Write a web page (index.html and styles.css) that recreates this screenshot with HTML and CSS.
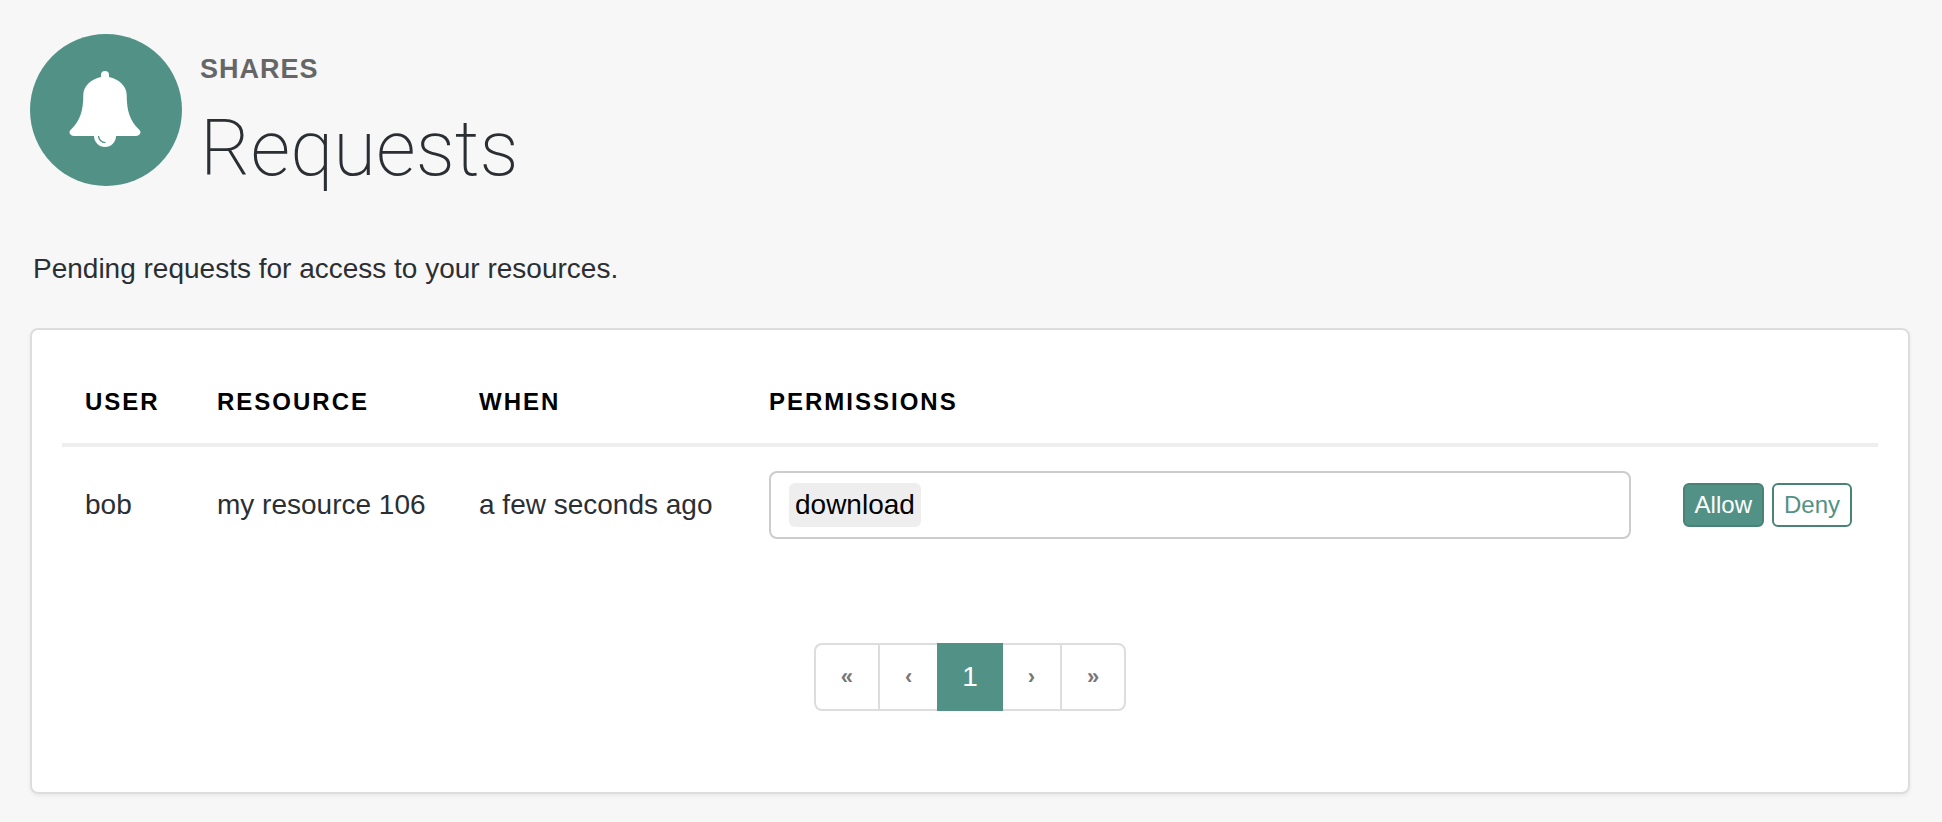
FILE: index.html
```html
<!DOCTYPE html>
<html lang="en">

<head>
    <meta charset="UTF-8">
    <meta name="viewport" content="width=device-width, initial-scale=1.0">
    <title>Requests</title>
    <link rel="stylesheet" href="styles.css">
</head>

<body>
    <header class="page-header">
        <!-- bell badge -->
        <svg class="page-icon" viewBox="0 0 152 152" aria-hidden="true">
            <circle class="disc" cx="76" cy="76" r="76" />
            <circle class="bell" cx="75" cy="102" r="11" />
            <path class="bell" d="M71 43V41a4 4 0 0 1 8 0V43C89 45 96.700 52 96.700 61C96.700 77 100 87 109 95.500C112 98 110 102 106 102H44C40 102 38 98 41 95.500C50 87 53.300 77 53.300 61C53.300 52 61 45 71 43Z" />
            <path class="bell-shine" d="M68.500 102a7 7 0 0 0 7 6.700" />
        </svg>
        <div class="page-titles">
            <h2 class="section-name">Shares</h2>
            <h1 class="page-title">Requests</h1>
        </div>
    </header>

    <p class="intro">Pending requests for access to your resources.</p>

    <main class="panel">
        <table class="requests">
            <thead>
                <tr>
                    <th class="col-user">User</th>
                    <th class="col-resource">Resource</th>
                    <th class="col-when">When</th>
                    <th><label for="permissions">Permissions</label></th>
                    <th class="col-actions"></th>
                </tr>
            </thead>
            <tbody>
                <tr>
                    <td>bob</td>
                    <td>my resource 106</td>
                    <td>a few seconds ago</td>
                    <td>
                        <div class="tag-box">
                            <span class="tag">download</span>
                            <input class="tag-input" id="permissions" type="text">
                        </div>
                    </td>
                    <td>
                        <div class="actions">
                            <button class="btn btn-primary" type="button">Allow</button>
                            <button class="btn" type="button">Deny</button>
                        </div>
                    </td>
                </tr>
            </tbody>
        </table>

        <nav class="pagination" aria-label="Pages">
            <a class="page-link" href="#first">«</a>
            <a class="page-link" href="#prev">‹</a>
            <a class="page-link active" href="#1">1</a>
            <a class="page-link" href="#next">›</a>
            <a class="page-link" href="#last">»</a>
        </nav>
    </main>
</body>

</html>
```
FILE: styles.css
```css
* {
    box-sizing: border-box;
    margin: 0;
    padding: 0;
}

body {
    background-color: #f7f7f7;
    color: #2b2f33;
    font-family: "Liberation Sans", Arial, sans-serif;
    font-size: 28px;
    line-height: 40px;
    padding: 34px 32px 30px 30px;
}

.page-header {
    display: flex;
    gap: 18px;
}

.page-icon {
    flex: none;
    width: 152px;
    height: 152px;
}

.disc {
    fill: #529286;
}

.bell {
    fill: #fff;
}

.bell-shine {
    fill: none;
    stroke: #529286;
    stroke-width: 1.3;
}

.page-titles {
    padding-top: 15px;
}

.section-name {
    color: #666;
    font-size: 27px;
    line-height: 40px;
    letter-spacing: 1px;
    text-transform: uppercase;
}

.page-title {
    margin-top: 12px;
    font-family: Roboto, sans-serif;
    font-size: 78px;
    font-weight: 200;
    line-height: 96px;
}

.intro {
    margin-top: 52px;
    padding-left: 3px;
}

.panel {
    margin-top: 39px;
    padding: 30px;
    background-color: #fff;
    border: 2px solid #ddd;
    border-radius: 8px;
    box-shadow: 0 2px 4px rgba(0, 0, 0, 0.06);
}

.requests {
    width: 100%;
    border-collapse: collapse;
}

.requests th {
    color: #000;
    font-size: 24px;
    letter-spacing: 2px;
    text-align: left;
    text-transform: uppercase;
    white-space: nowrap;
    padding: 22px 23px 21px;
    border-bottom: 4px solid #eee;
}

.requests td {
    padding: 24px 23px;
    white-space: nowrap;
}

.col-user {
    width: 132px;
}

.col-resource {
    width: 262px;
}

.col-when {
    width: 290px;
}

.col-actions {
    width: 224px;
}

.tag-box {
    display: flex;
    align-items: center;
    height: 68px;
    padding: 0 18px;
    border: 2px solid #ccc;
    border-radius: 8px;
}

.tag {
    padding: 2px 6px;
    color: #000;
    background-color: #eee;
    border-radius: 6px;
}

.tag-input {
    flex: 1;
    min-width: 0;
    border: none;
    outline: none;
    background: none;
    font: inherit;
}

.actions {
    display: flex;
    justify-content: flex-end;
    gap: 8px;
    padding-right: 3px;
}

.btn {
    height: 44px;
    padding: 0 10px;
    color: #529286;
    background-color: #fff;
    border: 2px solid #488376;
    border-radius: 6px;
    font-family: inherit;
    font-size: 24px;
}

.btn-primary {
    color: #fff;
    background-color: #529286;
}

.pagination {
    display: flex;
    width: max-content;
    margin: 80px auto 51px;
}

.page-link {
    height: 68px;
    padding: 0 25px;
    color: #777;
    border: 2px solid #ddd;
    border-right: none;
    font-size: 22px;
    font-weight: bold;
    line-height: 64px;
    text-decoration: none;
}

.page-link:first-child {
    border-radius: 8px 0 0 8px;
}

.page-link:last-child {
    border-right: 2px solid #ddd;
    border-radius: 0 8px 8px 0;
}

.page-link.active {
    color: #fff;
    background-color: #529286;
    border-color: #529286;
    border-left: none;
    font-size: 28px;
    font-weight: normal;
}

.page-link.active + .page-link {
    border-left: none;
}
```
